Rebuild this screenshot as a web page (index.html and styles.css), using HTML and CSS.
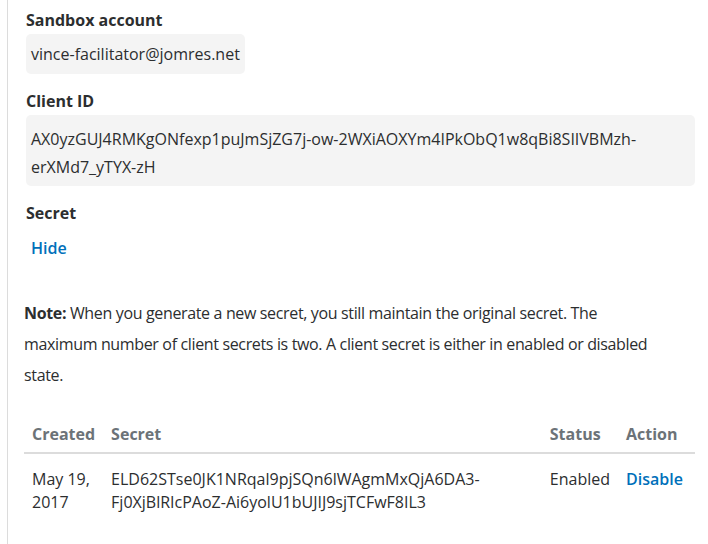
FILE: index.html
```html
<!DOCTYPE html>
<html>
<head>
<meta charset="utf-8">
<link rel="stylesheet" href="styles.css">
</head>
<body>
<div class="panel">
  <div class="field">
    <div class="label">Sandbox account</div>
    <div class="value email">vince-facilitator@jomres.net</div>
  </div>
  <div class="field">
    <div class="label">Client ID</div>
    <div class="value block">AX0yzGUJ4RMKgONfexp1puJmSjZG7j-ow-2WXiAOXYm4IPkObQ1w8qBi8SIIVBMzh-erXMd7_yTYX-zH</div>
  </div>
  <div class="field">
    <div class="label">Secret</div>
    <a class="link hide">Hide</a>
  </div>
  <p class="note"><b>Note:</b> When you generate a new secret, you still maintain the original secret. The<br>maximum number of client secrets is two. A client secret is either in enabled or disabled state.</p>
  <table class="secrets">
    <thead>
      <tr>
        <th class="c-created">Created</th>
        <th class="c-secret">Secret</th>
        <th class="c-status">Status</th>
        <th class="c-action">Action</th>
      </tr>
    </thead>
    <tbody>
      <tr>
        <td>May 19, 2017</td>
        <td>ELD62STse0JK1NRqal9pjSQn6lWAgmMxQjA6DA3-Fj0XjBlRIcPAoZ-Ai6yolU1bUJIJ9sjTCFwF8IL3</td>
        <td>Enabled</td>
        <td><a class="link">Disable</a></td>
      </tr>
    </tbody>
  </table>
</div>
</body>
</html>
```

FILE: styles.css
```css
html, body {
  margin: 0;
  padding: 0;
  background: #fff;
}
body {
  font-family: "Open Sans", "Noto Sans", sans-serif;
  color: #2c2e2f;
  font-size: 16px;
}
.panel {
  margin-left: 7px;
  border-left: 1px solid #dcdcdc;
  padding: 8px 13px 40px 16px;
  min-height: 500px;
}
.field {
  padding-left: 2px;
}
.label {
  font-weight: 700;
  line-height: 24px;
  color: #2c2e2f;
}
.value {
  background: #f4f4f4;
  border-radius: 5px;
  padding: 8px 5px;
  line-height: 24px;
  margin: 2px 0 15px;
}
.email {
  display: inline-block;
}
.block {
  line-height: 28px;
  padding: 10px 5px 5px;
}
.link {
  color: #0070ba;
  font-weight: 600;
  cursor: pointer;
}
.hide {
  display: inline-block;
  margin: 11px 0 0 5px;
  line-height: 24px;
}
.note {
  margin: 38px 0 0;
  padding-right: 16px;
  line-height: 31px;
  font-size: 16px;
  letter-spacing: -0.35px;
}
.secrets {
  margin-top: 23px;
  width: 100%;
  border-collapse: collapse;
}
.secrets th {
  text-align: left;
  color: #6c7378;
  font-weight: 700;
  padding: 8px 8px 6px;
  border-bottom: 2px solid #dcdcdc;
  line-height: 24px;
}
.secrets td {
  vertical-align: top;
  padding: 14px 8px;
  line-height: 23px;
}
.c-created { width: 63px; }
.c-status { width: 60px; }
.c-action { width: 61px; }
```
